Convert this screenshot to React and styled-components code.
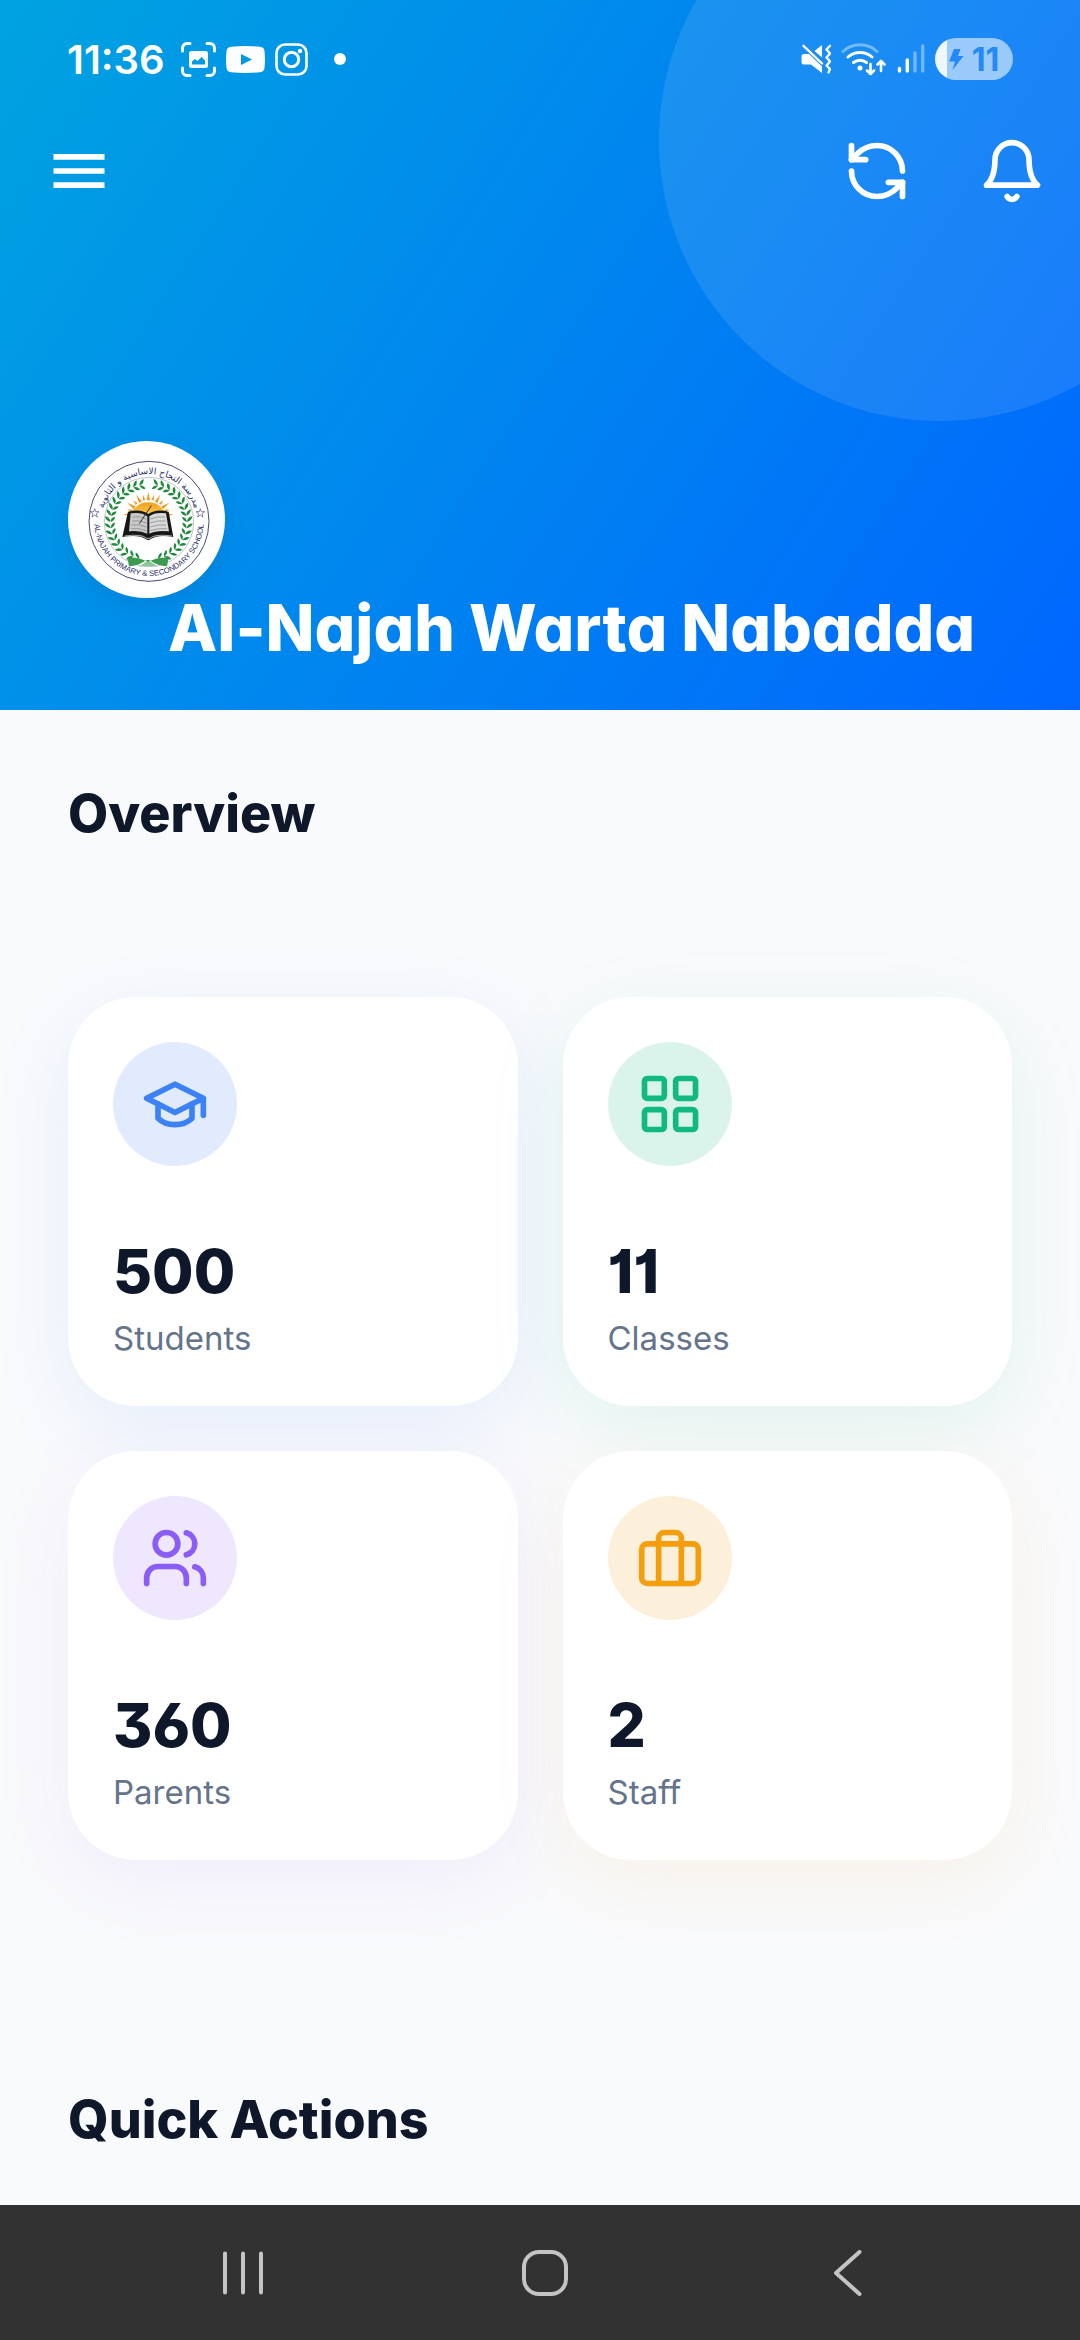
import React from 'react';
import styled, { createGlobalStyle } from 'styled-components';
import { LayoutGrid, RefreshCcw, Users } from 'lucide-react';
import { MdMenu } from 'react-icons/md';

const GlobalStyle = createGlobalStyle`
  * {
    box-sizing: border-box;
  }

  body {
    margin: 0;
    background: #f9fafc;
    color: #0f172a;
    font-family: Inter, 'Liberation Sans', sans-serif;
  }

  h1, h2, p {
    margin: 0;
  }

  svg {
    display: block;
  }
`;

const Screen = styled.div`
  display: flex;
  flex-direction: column;
  min-height: 100vh;
`;

const Header = styled.header`
  position: relative;
  overflow: hidden;
  padding-bottom: 52px;
  color: #fff;
  background: linear-gradient(123deg, #00a3e0, #0066ff);

  &::before {
    content: '';
    position: absolute;
    top: -141px;
    right: -141px;
    width: 562px;
    height: 562px;
    border-radius: 50%;
    background: rgba(255, 255, 255, 0.1);
  }
`;

const StatusBar = styled.div`
  position: relative;
  display: flex;
  align-items: center;
  justify-content: space-between;
  height: 118px;
  padding: 0 67px;
`;

const StatusGroup = styled.div`
  display: flex;
  align-items: center;
  gap: 10px;
`;

const Clock = styled.time`
  margin-right: 6px;
  font-size: 40px;
  font-weight: 600;
`;

const Dot = styled.span`
  width: 12px;
  height: 12px;
  margin-left: 16px;
  border-radius: 50%;
  background: #fff;
`;

const Battery = styled.div`
  display: flex;
  align-items: center;
  justify-content: center;
  gap: 8px;
  width: 78px;
  height: 42px;
  border-radius: 21px;
  color: #2389f5;
  font-size: 32px;
  font-weight: 700;
  background: linear-gradient(
    90deg,
    rgba(255, 255, 255, 0.93) 12px,
    rgba(255, 255, 255, 0.56) 12px
  );
`;

const Toolbar = styled.div`
  position: relative;
  display: flex;
  align-items: center;
  justify-content: space-between;
  height: 106px;
  padding: 0 34px 0 45px;
`;

const Actions = styled.div`
  display: flex;
  gap: 67px;
`;

const IconButton = styled.button`
  padding: 0;
  border: none;
  color: inherit;
  background: none;
  cursor: pointer;
`;

const School = styled.div`
  position: relative;
  margin-top: 217px;
  padding: 0 68px;
`;

const Avatar = styled.div`
  width: 157px;
  height: 157px;
  border-radius: 50%;
  background: #fff;
  box-shadow: 0 8px 24px rgba(0, 0, 0, 0.08);
`;

const SchoolName = styled.h1`
  padding-left: 100px;
  font-size: 64px;
  line-height: 60px;
  font-weight: 800;
  font-feature-settings: 'cv11';
  white-space: nowrap;
`;

const Main = styled.main`
  flex: 1;
  padding: 74px 68px 55px;
`;

const SectionTitle = styled.h2`
  font-size: 52px;
  line-height: 60px;
  font-weight: 800;
  font-feature-settings: 'cv11';
`;

const StatGrid = styled.div`
  display: grid;
  grid-template-columns: 1fr 1fr;
  gap: 45px;
  margin: 153px 0 230px;
`;

const StatCard = styled.section`
  padding: 45px 45px 48px;
  border-radius: 68px;
  background: #fff;
  box-shadow: 0 22px 80px ${({ $glow }) => $glow};
`;

const StatIcon = styled.div`
  display: flex;
  align-items: center;
  justify-content: center;
  width: 124px;
  height: 124px;
  margin-bottom: 71px;
  border-radius: 50%;
  color: ${({ $color }) => $color};
  background: ${({ $tint }) => $tint};
`;

const StatValue = styled.p`
  margin-bottom: 13px;
  font-size: 60px;
  line-height: 68px;
  font-weight: 800;
  font-feature-settings: 'cv01', 'cv03', 'cv09';
`;

const StatLabel = styled.p`
  color: #64748b;
  font-size: 33px;
  line-height: 40px;
`;

const NavBar = styled.nav`
  display: grid;
  grid-template-columns: repeat(3, 1fr);
  justify-items: center;
  align-items: center;
  height: 135px;
  padding: 0 81px 0 92px;
  color: #c4c4c4;
  background: #323232;
`;

const CapIcon = ({ size }) => (
  <svg
    width={size}
    height={size}
    viewBox="0 0 24 24"
    fill="none"
    stroke="currentColor"
    strokeWidth="2"
    strokeLinecap="round"
    strokeLinejoin="round"
  >
    <path d="M22 10v6M2 10l10-5 10 5-10 5z" />
    <path d="M6 12v5c3 3 9 3 12 0v-5" />
  </svg>
);

const CaseIcon = ({ size }) => (
  <svg
    width={size}
    height={size}
    viewBox="0 0 24 24"
    fill="none"
    stroke="currentColor"
    strokeWidth="2"
    strokeLinejoin="round"
  >
    <rect x="2" y="7" width="20" height="14" rx="2" />
    <path d="M16 21V5a2 2 0 0 0-2-2h-4a2 2 0 0 0-2 2v16" />
  </svg>
);

const BellIcon = ({ size }) => (
  <svg
    width={size}
    height={size}
    viewBox="0 0 24 24"
    fill="none"
    stroke="currentColor"
    strokeWidth="2"
    strokeLinecap="round"
    strokeLinejoin="round"
  >
    <path d="M6 8a6 6 0 0 1 12 0c0 7 3 9 3 9H3s3-2 3-9" />
    <path d="M10.3 21a1.94 1.94 0 0 0 3.4 0" />
  </svg>
);

const CaptureIcon = () => (
  <svg width="35" height="35" viewBox="0 0 35 35" fill="none" stroke="#fff">
    <path
      d="M1.5 9V6A4.5 4.5 0 0 1 6 1.5h3M26 1.5h3A4.5 4.5 0 0 1 33.5 6v3M33.5 26v3a4.5 4.5 0 0 1-4.5 4.5h-3M9 33.5H6A4.5 4.5 0 0 1 1.5 29v-3"
      strokeWidth="3"
      strokeLinecap="round"
    />
    <path
      fill="#fff"
      stroke="none"
      fillRule="evenodd"
      d="M10.5 9h14a2.5 2.5 0 0 1 2.5 2.5v12a2.5 2.5 0 0 1-2.5 2.5h-14A2.5 2.5 0 0 1 8 23.5v-12A2.5 2.5 0 0 1 10.5 9zM11 22.5h13v-4L20.5 15l-4 4-2.5-2-3 2.5z"
    />
  </svg>
);

const VideoIcon = () => (
  <svg width="39" height="27" viewBox="0 0 39 27">
    <path
      fill="#fff"
      fillRule="evenodd"
      d="M5 .8Q19.5-.6 34 .8q4 .4 4.5 4.2.9 8.500 0 17-.5 3.800-4.500 4.200-14.500 1.400-29 0-4-.4-4.500-4.200-.9-8.500 0-17Q1 1.200 5 .8zM15 8v11l11-5.500z"
    />
  </svg>
);

const CameraIcon = () => (
  <svg width="33" height="33" viewBox="0 0 33 33" fill="none" stroke="#fff">
    <rect x="1.5" y="1.5" width="30" height="30" rx="8.5" strokeWidth="2.6" />
    <circle cx="16.5" cy="16.5" r="7.2" strokeWidth="3" />
    <circle cx="25" cy="8" r="2.2" fill="#fff" stroke="none" />
  </svg>
);

const MutedIcon = () => (
  <svg width="30" height="30" viewBox="0 0 30 30" fill="#fff">
    <path d="M3 10h5l13 12.5V29L10 20.5H3A2.5 2.5 0 0 1 .5 18v-5.500A2.500 2.500 0 0 1 3 10z" />
    <path d="M21 1v12.500L13.500 7z" />
    <path
      d="M2.500 1.800L21 19.500M29 1.800L25.500 5.500l3.500 4-3.500 4 3.500 4-3.500 4 3.500 3.500-1.500 3.500"
      fill="none"
      stroke="#fff"
      strokeWidth="2.4"
      strokeLinecap="round"
      strokeLinejoin="round"
    />
  </svg>
);

const WifiIcon = () => (
  <svg
    width="46"
    height="34"
    viewBox="0 0 46 34"
    fill="none"
    stroke="#fff"
    strokeWidth="3"
    strokeLinecap="round"
    strokeLinejoin="round"
  >
    <path d="M2 9.500a25 25 0 0 1 34 0" opacity=".4" />
    <path d="M7 15a18 18 0 0 1 24 0M12.500 20.500a10.500 10.500 0 0 1 13 0" />
    <circle cx="19" cy="26" r="2.5" fill="#fff" stroke="none" />
    <path
      d="M29.500 22v10M26 28.500l3.500 3.500 3.500-3.500M40 29V19M36.500 22.500L40 19l3.500 3.500"
      strokeWidth="2.6"
    />
  </svg>
);

const SignalIcon = () => (
  <svg
    width="28"
    height="30"
    viewBox="0 0 28 30"
    stroke="#fff"
    strokeWidth="3.4"
    strokeLinecap="round"
  >
    <path d="M2.500 24.500V27M10.300 16v11" />
    <path d="M18 9v18M25.700 2v25" opacity=".38" />
  </svg>
);

const BoltIcon = () => (
  <svg width="15" height="21" viewBox="0 0 15 21" fill="currentColor">
    <path d="M5 0h6.500L9 7h5.500L3.500 21 6 12.500H0z" />
  </svg>
);

// a branch of paired leaves bent round the inner ring
const Laurel = ({ flip }) => (
  <g transform={flip ? 'translate(484 0) scale(-1 1)' : undefined} fill="#1f8a3c">
    {Array.from({ length: 17 }, (_, i) => {
      const deg = 256 - i * 9.5;
      const rad = (deg * Math.PI) / 180;
      const x = 242 + 115 * Math.cos(rad);
      const y = 243 + 113 * Math.sin(rad);
      return (
        <g key={deg} transform={`translate(${x} ${y}) rotate(${deg + 90})`}>
          <path d="M0 0q5-15 17-16q-2 15-17 16z" />
          <path d="M0 0q3 12 15 15q0-13-15-15z" />
        </g>
      );
    })}
  </g>
);

const SchoolSeal = () => (
  <svg width="157" height="157" viewBox="0 0 471 471" role="img" aria-label="School seal">
    <defs>
      <path id="seal-top" d="M101 241a142 142 0 0 1 284 0" />
      <path id="seal-bottom" d="M79 241a164 164 0 0 0 328 0" />
      <linearGradient id="seal-sun" x1="0" y1="0" x2="0" y2="1">
        <stop offset="0" stopColor="#f0a11c" />
        <stop offset="1" stopColor="#fbd45a" />
      </linearGradient>
    </defs>
    <circle cx="243" cy="241" r="180" fill="none" stroke="#4a4a78" strokeWidth="3" />
    <circle cx="243" cy="243" r="134" fill="none" stroke="#a3a8b5" strokeWidth="2" />
    <text
      fill="#2b2f6b"
      fontFamily="'DejaVu Sans', sans-serif"
      fontSize="27"
      textAnchor="middle"
    >
      <textPath href="#seal-top" startOffset="50%">
        مدرسة النجاح الاساسية و الثانوية
      </textPath>
    </text>
    <text
      fill="#2b2f6b"
      fontFamily="'Liberation Sans', sans-serif"
      fontSize="23"
      textAnchor="middle"
    >
      <textPath href="#seal-bottom" startOffset="50%">
        AL-NAJAH PRIMARY &amp; SECONDARY SCHOOL
      </textPath>
    </text>
    {[80, 397].map(x => (
      <path
        key={x}
        transform={`translate(${x} 216)`}
        d="M0-13l3 9h10l-8 6 3 10-8-6-8 6 3-10-8-6h10z"
        fill="none"
        stroke="#4a4a78"
        strokeWidth="2"
      />
    ))}
    <Laurel />
    <Laurel flip />
    <path
      d="M178 350q38-2 62 14 24-16 62-14l-5 26q-28-2-48-16l-9-4-9 4q-20 14-48 16z"
      fill="#3b9a50"
    />
    <path d="M214 376l20-14h14l20 14z" fill="#8cc79a" />
    {Array.from({ length: 13 }, (_, i) => (
      <path
        key={i}
        transform={`translate(241 228) rotate(${-84 + i * 14})`}
        d={i % 2 ? 'M-4-52L0-68 4-52z' : 'M-5-50L0-76 5-50z'}
        fill="#e99a2e"
      />
    ))}
    <path d="M189 230a52 46 0 0 1 104 0z" fill="url(#seal-sun)" />
    <path
      d="M180 212q38-10 61 7 23-17 61-7l14 76q-47-8-67 6l-8 4-8-4q-20-14-70-6z"
      fill="#171717"
    />
    <path d="M188 217q33-5 50 9v52q-22-11-55-7z" fill="#c9c9c9" />
    <path d="M294 217q-33-5-50 9v52q22-11 59-7z" fill="#d9d9d9" />
    <path
      d="M193 228q22-4 42 6M192 240q22-4 43 6M190 252q22-4 45 6M189 263q22-3 46 6M247 234q22-9 44-6M247 246q22-9 46-6M247 258q22-9 48-6M247 269q22-8 50-6"
      fill="none"
      stroke="#8d8d8d"
      strokeWidth="2.5"
    />
    <path d="M170 285q52-7 66 7h10q14-14 66-7" fill="none" stroke="#fff" strokeWidth="2" />
    <path d="M214 248l36-54" stroke="#333" strokeWidth="3" />
  </svg>
);

const stats = [
  {
    label: 'Students',
    value: 500,
    icon: CapIcon,
    color: '#3b82f6',
    tint: '#e2ebfe',
    glow: 'rgba(59, 130, 246, 0.1)',
  },
  {
    label: 'Classes',
    value: 11,
    icon: LayoutGrid,
    color: '#10b981',
    tint: '#dbf4eb',
    glow: 'rgba(16, 185, 129, 0.1)',
  },
  {
    label: 'Parents',
    value: 360,
    icon: Users,
    color: '#8b5cf6',
    tint: '#eee7fe',
    glow: 'rgba(139, 92, 246, 0.08)',
  },
  {
    label: 'Staff',
    value: 2,
    icon: CaseIcon,
    color: '#f59e0b',
    tint: '#fdf0db',
    glow: 'rgba(245, 158, 11, 0.08)',
  },
];

const App = () => (
  <Screen>
    <GlobalStyle />

    <Header>
      <StatusBar>
        <StatusGroup>
          <Clock>11:36</Clock>
          <CaptureIcon />
          <VideoIcon />
          <CameraIcon />
          <Dot />
        </StatusGroup>
        <StatusGroup>
          <MutedIcon />
          <WifiIcon />
          <SignalIcon />
          <Battery>
            <BoltIcon />
            11
          </Battery>
        </StatusGroup>
      </StatusBar>

      <Toolbar>
        <IconButton aria-label="Menu">
          <MdMenu size={68} />
        </IconButton>
        <Actions>
          <IconButton aria-label="Refresh">
            <RefreshCcw size={68} />
          </IconButton>
          <IconButton aria-label="Notifications">
            <BellIcon size={68} />
          </IconButton>
        </Actions>
      </Toolbar>

      <School>
        <Avatar>
          <SchoolSeal />
        </Avatar>
        <SchoolName>Al-Najah Warta Nabadda</SchoolName>
      </School>
    </Header>

    <Main>
      <SectionTitle>Overview</SectionTitle>
      <StatGrid>
        {stats.map(({ label, value, icon: Icon, color, tint, glow }) => (
          <StatCard key={label} $glow={glow}>
            <StatIcon $color={color} $tint={tint}>
              <Icon size={68} />
            </StatIcon>
            <StatValue>{value}</StatValue>
            <StatLabel>{label}</StatLabel>
          </StatCard>
        ))}
      </StatGrid>
      <SectionTitle>Quick Actions</SectionTitle>
    </Main>

    <NavBar>
      <IconButton aria-label="Recent apps">
        <svg
          width="46"
          height="46"
          viewBox="0 0 46 46"
          stroke="currentColor"
          strokeWidth="4"
          strokeLinecap="round"
        >
          <path d="M5 3.500v39M23 3.500v39M41 3.500v39" />
        </svg>
      </IconButton>
      <IconButton aria-label="Home">
        <svg
          width="46"
          height="46"
          viewBox="0 0 46 46"
          fill="none"
          stroke="currentColor"
          strokeWidth="4"
        >
          <rect x="2" y="2" width="42" height="42" rx="15" />
        </svg>
      </IconButton>
      <IconButton aria-label="Back">
        <svg
          width="46"
          height="46"
          viewBox="0 0 46 46"
          fill="none"
          stroke="currentColor"
          strokeWidth="4"
          strokeLinecap="round"
          strokeLinejoin="round"
        >
          <path d="M34.500 2L11 23l23.500 21" />
        </svg>
      </IconButton>
    </NavBar>
  </Screen>
);

export default App;
